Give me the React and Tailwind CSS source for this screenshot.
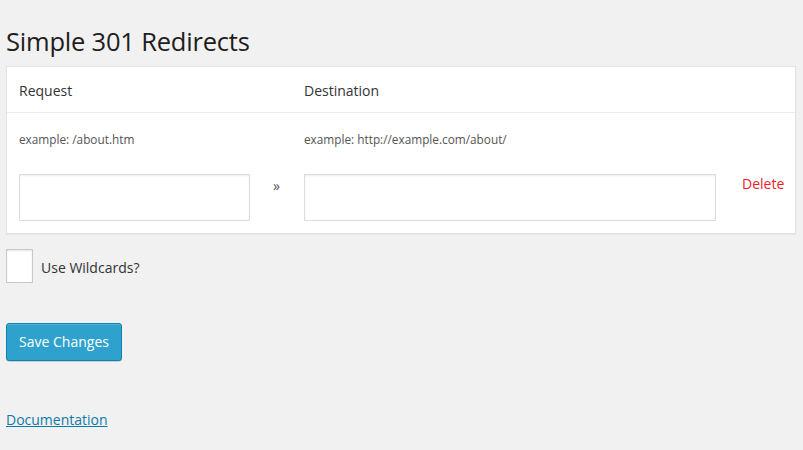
import React from "react";

export default function App() {
  return (
    <div
      className="w-[803px] h-[450px] bg-[#f1f1f1] overflow-hidden pl-[6px] pr-[7px] text-[#333]"
      style={{ fontFamily: '"Open Sans", "Noto Sans", sans-serif' }}
    >
      <h1 className="pt-[23px] text-[25.5px] leading-[36px] font-normal text-[#1e1e1e] tracking-[-0.2px]">
        Simple 301 Redirects
      </h1>

      <div className="mt-[7px] bg-white border border-[#e3e3e3] shadow-[0_1px_1px_rgba(0,0,0,0.04)]">
        <div className="grid grid-cols-[231px_54px_412px_1fr] h-[46px] items-center px-[12px] border-b border-[#ececec] text-[14px] text-[#333]">
          <div className="pt-[2px]">Request</div>
          <div></div>
          <div className="pt-[2px]">Destination</div>
          <div></div>
        </div>
        <div className="px-[12px] pt-[17px] pb-[12px]">
          <div className="grid grid-cols-[231px_54px_412px_1fr] text-[11.8px] leading-[18px] text-[#555]">
            <div>example: /about.htm</div>
            <div></div>
            <div>example: http://example.com/about/</div>
            <div></div>
          </div>
          <div className="grid grid-cols-[231px_54px_412px_1fr] items-start mt-[26px]">
            <input
              type="text"
              className="h-[47px] w-full border border-[#dddddd] bg-white shadow-[inset_0_1px_2px_rgba(0,0,0,0.07)] outline-none"
            />
            <div className="pl-[23px] pt-[2px] text-[14px] leading-[20px] text-[#555]">»</div>
            <input
              type="text"
              className="h-[47px] w-full border border-[#dddddd] bg-white shadow-[inset_0_1px_2px_rgba(0,0,0,0.07)] outline-none"
            />
            <div className="pl-[26px] pt-[0px] text-[14px] leading-[20px] text-[#e8202b]">Delete</div>
          </div>
        </div>
      </div>

      <div className="mt-[15px] flex items-center gap-[8px]">
        <div className="w-[27px] h-[34px] bg-white border border-[#c8c8c8] shadow-[inset_0_1px_2px_rgba(0,0,0,0.1)]"></div>
        <span className="text-[14px] leading-[20px] text-[#333] mt-[3px]">Use Wildcards?</span>
      </div>

      <button className="mt-[40px] w-[116px] h-[38px] rounded-[3px] bg-[#2ea2cc] border border-[#0e81ac] text-white text-[14px] leading-[20px] shadow-[inset_0_1px_0_rgba(120,200,230,0.5),0_1px_0_rgba(0,0,0,0.15)]">
        Save Changes
      </button>

      <div className="mt-[46px]">
        <a href="#" className="text-[14px] leading-[20px] text-[#0f7aa6] underline">
          Documentation
        </a>
      </div>
    </div>
  );
}
